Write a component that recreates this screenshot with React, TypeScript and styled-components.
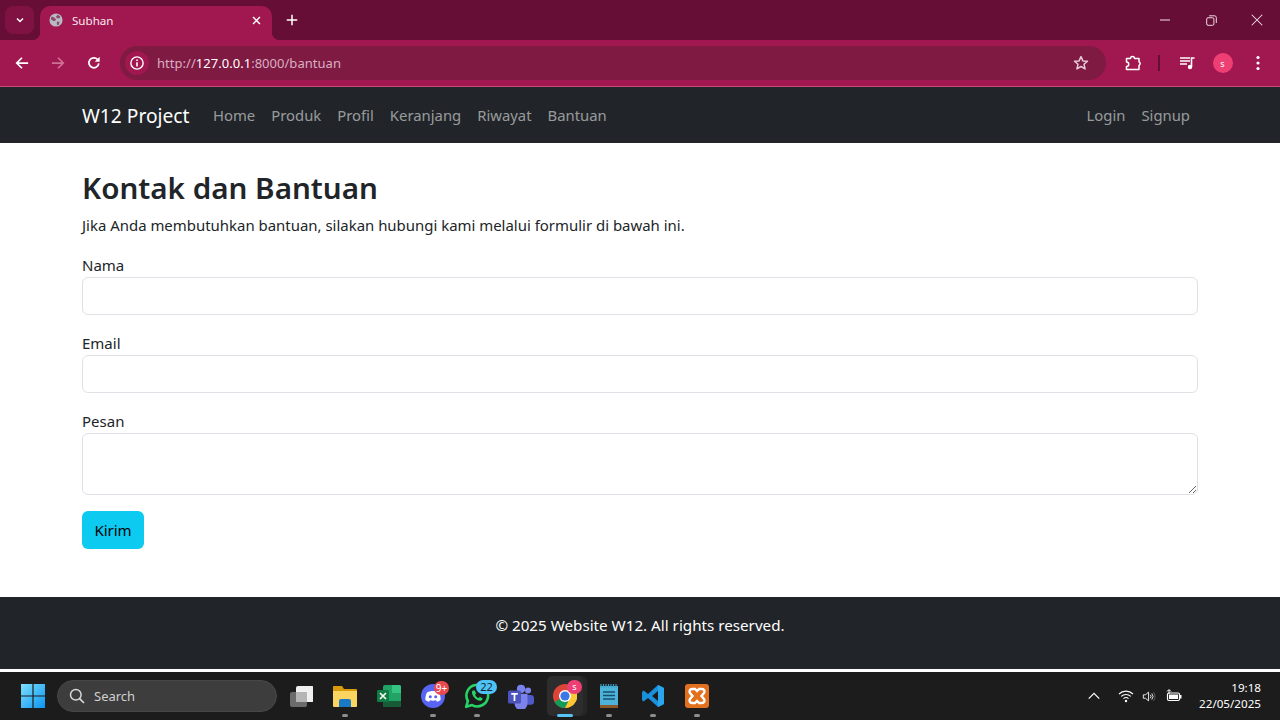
import styled, { createGlobalStyle } from 'styled-components';
import { ReactNode } from 'react';

const GlobalStyle = createGlobalStyle`
	html, body {
		margin: 0;
		padding: 0;
		height: 720px;
		overflow: hidden;
		background: #fff;
		font-family: 'Noto Sans', 'Open Sans', sans-serif;
	}
	* {
		box-sizing: border-box;
	}
`;

const Screen = styled.div`
	width: 1280px;
	height: 720px;
	display: flex;
	flex-direction: column;
	overflow: hidden;
`;

/* Browser chrome */
const TabStrip = styled.div`
	height: 40px;
	background: #660e35;
	display: flex;
	align-items: flex-end;
	padding-left: 5px;
	color: #fff;
`;
const TabSearch = styled.div`
	width: 29px;
	height: 28px;
	margin: 0 6px 6px 0;
	border-radius: 8px;
	background: #7f1242;
	display: flex;
	align-items: center;
	justify-content: center;
`;
const Tab = styled.div`
	position: relative;
	width: 232px;
	height: 34px;
	background: #a1174f;
	border-radius: 10px 10px 0 0;
	display: flex;
	align-items: center;
	padding: 0 10px 6px 9px;
	gap: 9px;
	&::after {
		content: '';
		position: absolute;
		right: -8px;
		bottom: 0;
		width: 8px;
		height: 8px;
		background: radial-gradient(circle at 100% 0, transparent 8px, #a1174f 8.5px);
	}
	&::before {
		content: '';
		position: absolute;
		left: -8px;
		bottom: 0;
		width: 8px;
		height: 8px;
		background: radial-gradient(circle at 0 0, transparent 8px, #a1174f 8.5px);
	}
`;
const TabTitle = styled.span`
	flex: 1;
	font-size: 11.6px;
	color: #f7e8ee;
`;
const NewTab = styled.div`
	width: 40px;
	height: 34px;
	padding-bottom: 6px;
	display: flex;
	align-items: center;
	justify-content: center;
`;
const WindowControls = styled.div`
	margin-left: auto;
	height: 40px;
	display: flex;
`;
const WindowButton = styled.div`
	width: 46px;
	height: 40px;
	display: flex;
	align-items: center;
	justify-content: center;
`;
const Toolbar = styled.div`
	height: 47px;
	background: #a1174f;
	border-bottom: 1px solid #c9497d;
	display: flex;
	align-items: center;
	padding: 0 4px;
`;
const ToolButton = styled.div<{ $w?: number }>`
	width: ${(p) => p.$w ?? 36}px;
	height: 34px;
	display: flex;
	align-items: center;
	justify-content: center;
	flex-shrink: 0;
`;
const Omnibox = styled.div`
	width: 986px;
	height: 34px;
	margin: 0 9px 0 8px;
	border-radius: 17px;
	background: #7f1a42;
	display: flex;
	align-items: center;
	padding: 0 17px 0 5px;
`;
const SiteInfo = styled.div`
	width: 24px;
	height: 24px;
	border-radius: 50%;
	background: #a1174f;
	display: flex;
	align-items: center;
	justify-content: center;
	margin-right: 8px;
`;
const Url = styled.div`
	flex: 1;
	font-size: 13px;
	letter-spacing: 0.03px;
	color: #d9afc2;
	b {
		font-weight: 400;
		color: #fff;
	}
`;
const ToolDivider = styled.div`
	width: 2px;
	height: 16px;
	background: #660e35;
	margin: 0 9px 0 7px;
`;
const Avatar = styled.div`
	width: 20px;
	height: 20px;
	border-radius: 50%;
	background: #ee3f75;
	color: #fff;
	font-size: 9px;
	display: flex;
	align-items: center;
	justify-content: center;
`;

/* Website */
const Navbar = styled.nav`
	height: 56px;
	background: #212529;
	display: flex;
	align-items: center;
	padding: 0 82px;
`;
const Brand = styled.div`
	font-size: 19.2px;
	color: #fff;
	width: 123px;
	white-space: nowrap;
`;
const NavLinks = styled.div<{ $right?: boolean }>`
	display: flex;
	margin-left: ${(p) => (p.$right ? 'auto' : '0')};
`;
const NavLink = styled.a`
	padding: 0 8px;
	font-size: 14.85px;
	color: rgba(255, 255, 255, 0.55);
	white-space: nowrap;
`;
const Main = styled.main`
	flex: 1;
	padding: 24px 82px 0;
	color: #212529;
`;
const Heading = styled.h1`
	margin: 0 0 6px;
	padding-top: 2px;
	font-size: 29.6px;
	font-weight: 600;
	line-height: 38.4px;
`;
const Lead = styled.p`
	margin: 0 0 16px;
	font-size: 14.95px;
	line-height: 24px;
`;
const Field = styled.div`
	margin-bottom: 16px;
`;
const Label = styled.label`
	display: block;
	font-size: 15px;
	line-height: 24px;
`;
const Input = styled.input`
	display: block;
	width: 100%;
	height: 38px;
	border: 1px solid #dee2e6;
	border-radius: 6px;
	background: #fff;
`;
const TextArea = styled.textarea`
	display: block;
	width: 100%;
	height: 62px;
	border: 1px solid #dee2e6;
	border-radius: 6px;
	background: #fff;
`;
const SubmitButton = styled.button`
	display: block;
	width: 62px;
	height: 38px;
	padding: 0;
	border: 0;
	border-radius: 6px;
	background: #0dcaf0;
	color: #000;
	font-family: inherit;
	font-size: 15px;
`;
const Footer = styled.footer`
	height: 72px;
	padding-top: 16px;
	background: #212529;
	color: #fff;
	text-align: center;
	font-size: 15.2px;
	line-height: 24px;
`;
const WhiteGap = styled.div`
	height: 3px;
	background: #fff;
`;

/* Windows taskbar */
const Taskbar = styled.div`
	height: 48px;
	background: #1c1c1c;
	display: flex;
	align-items: center;
	padding-left: 11px;
	color: #fff;
`;
const Slot = styled.div<{ $active?: boolean }>`
	position: relative;
	width: ${(p) => (p.$active ? 36 : 44)}px;
	height: 40px;
	margin: -1px ${(p) => (p.$active ? 4 : 0)}px 0;
	border-radius: 5px;
	display: flex;
	align-items: center;
	justify-content: center;
	background: ${(p) => (p.$active ? '#2d2d2d' : 'transparent')};
	box-shadow: ${(p) => (p.$active ? '4px 0 0 #262626' : 'none')};
`;
const Running = styled.span<{ $active?: boolean }>`
	position: absolute;
	bottom: -1px;
	left: 50%;
	transform: translateX(-50%);
	width: ${(p) => (p.$active ? 16 : 6)}px;
	height: 3px;
	border-radius: 2px;
	background: ${(p) => (p.$active ? '#58c4f5' : '#8e8e8e')};
`;
const Badge = styled.span<{ $bg: string; $w: number; $top: number; $right: number; $size?: number; $color?: string }>`
	position: absolute;
	top: ${(p) => p.$top}px;
	right: ${(p) => p.$right}px;
	width: ${(p) => p.$w}px;
	height: 14px;
	border-radius: 7px;
	background: ${(p) => p.$bg};
	color: ${(p) => p.$color ?? '#fff'};
	font-size: ${(p) => p.$size ?? 9}px;
	line-height: 14px;
	text-align: center;
`;
const SearchBox = styled.div`
	width: 220px;
	height: 32px;
	margin: 0 2px;
	border-radius: 16px;
	background: #3d3d3d;
	border: 1px solid #474747;
	display: flex;
	align-items: center;
	padding-left: 11px;
	gap: 9px;
	font-size: 13px;
	color: #d0d0d0;
`;
const Tray = styled.div`
	margin-left: auto;
	display: flex;
	align-items: center;
	height: 100%;
`;
const TrayIcon = styled.div<{ $w: number }>`
	width: ${(p) => p.$w}px;
	display: flex;
	justify-content: center;
`;
const Clock = styled.div`
	width: 88px;
	padding-right: 19px;
	text-align: right;
	font-size: 11.65px;
	line-height: 16px;
`;

const Svg = ({ size = 16, children }: { size?: number; children: ReactNode }) => (
	<svg width={size} height={size} viewBox="0 0 16 16" fill="none">
		{children}
	</svg>
);
const Icon24 = ({ size = 24, children }: { size?: number; children: ReactNode }) => (
	<svg width={size} height={size} viewBox="0 0 24 24" fill="none">
		{children}
	</svg>
);

function TaskApp({ children, active, running = true, badge }: { children: ReactNode; active?: boolean; running?: boolean; badge?: ReactNode }) {
	return (
		<Slot $active={active}>
			{children}
			{badge}
			{running && <Running $active={active} />}
		</Slot>
	);
}

export default function App() {
	return (
		<Screen>
			<GlobalStyle />
			<TabStrip>
				<TabSearch>
					<Svg size={12}>
						<path d="M4 6l4 4 4-4" stroke="#fff" strokeWidth="2" />
					</Svg>
				</TabSearch>
				<Tab>
					<Svg size={14}>
						<circle cx="8" cy="8" r="7.5" fill="#b7bcc4" />
						<path d="M3 4l3 1 2 2-1 2-2 0-3-2zM10 2l3 2-1 2-3 0-1-2zM9 10l3 0-1 4-2-1z" fill="#8d4a69" />
					</Svg>
					<TabTitle>Subhan</TabTitle>
					<Svg size={11}>
						<path d="M3 3l10 10M13 3L3 13" stroke="#fff" strokeWidth="2.2" />
					</Svg>
				</Tab>
				<NewTab>
					<Svg size={12}>
						<path d="M8 1v14M1 8h14" stroke="#fff" strokeWidth="2" />
					</Svg>
				</NewTab>
				<WindowControls>
					<WindowButton>
						<Svg size={10}>
							<path d="M0 8h16" stroke="#f2e3ea" strokeWidth="1.6" />
						</Svg>
					</WindowButton>
					<WindowButton>
						<Svg size={11}>
							<rect x="1" y="4" width="10.5" height="11" rx="2" stroke="#f2e3ea" strokeWidth="1.4" />
							<path d="M4.5 1.2h8a2.5 2.5 0 0 1 2.5 2.5v8" stroke="#f2e3ea" strokeWidth="1.4" />
						</Svg>
					</WindowButton>
					<WindowButton>
						<Svg size={12}>
							<path d="M1 1l14 14M15 1L1 15" stroke="#f2e3ea" strokeWidth="1.4" />
						</Svg>
					</WindowButton>
				</WindowControls>
			</TabStrip>
			<Toolbar>
				<ToolButton>
					<Svg size={14}>
						<path d="M15 8H2M8 2L2 8l6 6" stroke="#fff" strokeWidth="2" />
					</Svg>
				</ToolButton>
				<ToolButton>
					<Svg size={14}>
						<path d="M1 8h13M8 2l6 6-6 6" stroke="#cf7095" strokeWidth="2" />
					</Svg>
				</ToolButton>
				<ToolButton>
					<Svg size={14}>
						<path d="M13.5 8.5A5.7 5.7 0 1 1 12 3.8" stroke="#fff" strokeWidth="2" />
						<path d="M14.5 0.8v5.7H8.8z" fill="#fff" />
					</Svg>
				</ToolButton>
				<Omnibox>
					<SiteInfo>
						<Svg size={14}>
							<circle cx="8" cy="8" r="7" stroke="#fff" strokeWidth="1.6" />
							<path d="M8 7v5M8 4v1.8" stroke="#fff" strokeWidth="1.8" />
						</Svg>
					</SiteInfo>
					<Url>
						http://<b>127.0.0.1</b>:8000/bantuan
					</Url>
					<Svg size={16}>
						<path d="M8 1.6l1.9 4.3 4.6.4-3.5 3 1.1 4.6L8 11.5l-4.1 2.4L5 9.3l-3.5-3 4.6-.4z" stroke="#e7cbd8" strokeWidth="1.5" strokeLinejoin="round" />
					</Svg>
				</Omnibox>
				<ToolButton>
					<Svg size={16}>
						<path d="M1.5 3.5h4a2 2 0 0 1 4 0h4.5v3.2a2 2 0 0 1 0 3.6V14.5H1.5v-3a2 2 0 0 0 0-4.5z" stroke="#fff" strokeWidth="1.5" strokeLinejoin="round" />
					</Svg>
				</ToolButton>
				<ToolDivider />
				<ToolButton $w={36}>
					<Svg size={16}>
						<path d="M1 3h10M1 6h10M1 9h7" stroke="#fff" strokeWidth="1.5" />
						<circle cx="11" cy="12" r="2.2" fill="#fff" />
						<path d="M12.5 12V3h3" stroke="#fff" strokeWidth="1.6" />
					</Svg>
				</ToolButton>
				<ToolButton $w={35}>
					<Avatar>s</Avatar>
				</ToolButton>
				<ToolButton>
					<Svg size={16}>
						<circle cx="8" cy="2.5" r="1.6" fill="#fff" />
						<circle cx="8" cy="8" r="1.6" fill="#fff" />
						<circle cx="8" cy="13.5" r="1.6" fill="#fff" />
					</Svg>
				</ToolButton>
			</Toolbar>

			<Navbar>
				<Brand>W12 Project</Brand>
				<NavLinks>
					<NavLink>Home</NavLink>
					<NavLink>Produk</NavLink>
					<NavLink>Profil</NavLink>
					<NavLink>Keranjang</NavLink>
					<NavLink>Riwayat</NavLink>
					<NavLink>Bantuan</NavLink>
				</NavLinks>
				<NavLinks $right>
					<NavLink>Login</NavLink>
					<NavLink>Signup</NavLink>
				</NavLinks>
			</Navbar>
			<Main>
				<Heading>Kontak dan Bantuan</Heading>
				<Lead>Jika Anda membutuhkan bantuan, silakan hubungi kami melalui formulir di bawah ini.</Lead>
				<Field>
					<Label>Nama</Label>
					<Input />
				</Field>
				<Field>
					<Label>Email</Label>
					<Input />
				</Field>
				<Field>
					<Label>Pesan</Label>
					<TextArea />
				</Field>
				<SubmitButton>Kirim</SubmitButton>
			</Main>
			<Footer>© 2025 Website W12. All rights reserved.</Footer>
			<WhiteGap />

			<Taskbar>
				<Slot>
					<Svg size={24}>
						<defs>
							<linearGradient id="win" x1="0" y1="0" x2="1" y2="1">
								<stop offset="0" stopColor="#7fe0ff" />
								<stop offset="1" stopColor="#0a93f0" />
							</linearGradient>
						</defs>
						<path d="M0 0h7.6v7.6H0zM8.4 0H16v7.6H8.4zM0 8.4h7.6V16H0zM8.4 8.4H16V16H8.4z" fill="url(#win)" />
					</Svg>
				</Slot>
				<SearchBox>
					<Svg size={16}>
						<circle cx="6.8" cy="6.8" r="5.3" stroke="#d8d8d8" strokeWidth="1.5" />
						<path d="M10.6 10.6L15 15" stroke="#d8d8d8" strokeWidth="1.7" />
					</Svg>
					Search
				</SearchBox>
				<TaskApp running={false}>
					<Icon24>
						<rect x="1" y="8" width="17" height="15" rx="2" fill="#6b6b6b" />
						<rect x="7" y="2" width="18" height="16" rx="2" fill="#f0f0f0" />
						<rect x="7" y="8" width="11" height="10" fill="#b5b5b5" />
					</Icon24>
				</TaskApp>
				<TaskApp>
					<Icon24>
						<path d="M0 3a1 1 0 0 1 1-1h8l2 3h12a1 1 0 0 1 1 1v2H0z" fill="#d99a0c" />
						<path d="M0 7h24v15a1 1 0 0 1-1 1H1a1 1 0 0 1-1-1z" fill="#fbd560" />
						<path d="M6 17a2 2 0 0 1 2-2h8a2 2 0 0 1 2 2v6H6z" fill="#1a78c4" />
					</Icon24>
				</TaskApp>
				<TaskApp running={false}>
					<Icon24>
						<rect x="6" y="1" width="18" height="22" rx="2" fill="#21a366" />
						<path d="M15 1h7a2 2 0 0 1 2 2v6h-9z" fill="#33c481" />
						<path d="M6 17h18v4a2 2 0 0 1-2 2H8a2 2 0 0 1-2-2z" fill="#185c37" />
						<rect x="0" y="6" width="12" height="12" rx="1" fill="#107c41" />
						<path d="M3 9l6 6M9 9l-6 6" stroke="#fff" strokeWidth="1.6" />
					</Icon24>
				</TaskApp>
				<TaskApp
					badge={
						<Badge $bg="#ea4a4f" $w={15} $top={5} $right={6} $size={10}>
							9+
						</Badge>
					}
				>
					<Icon24>
						<circle cx="12" cy="12" r="12" fill="#5865f2" />
						<path d="M6 8.5c3.5-2 8.5-2 12 0 1.3 2.4 1.8 5 1.6 7.5-1.3 1-2.5 1.5-3.7 1.8l-.9-1.5c-2 .6-4 .6-6 0l-.9 1.5c-1.2-.3-2.4-.8-3.7-1.8-.2-2.5.3-5.1 1.6-7.5z" fill="#fff" />
						<circle cx="9.3" cy="12.8" r="1.5" fill="#5865f2" />
						<circle cx="14.7" cy="12.8" r="1.5" fill="#5865f2" />
					</Icon24>
				</TaskApp>
				<TaskApp
					badge={
						<Badge $bg="#4fc3f7" $w={21} $top={4} $right={2} $size={11} $color="#12242c">
							22
						</Badge>
					}
				>
					<Icon24 size={26}>
						<path d="M2 22l1.6-5.4A10 10 0 1 1 7.5 20.4z" stroke="#25d366" strokeWidth="2.4" strokeLinejoin="round" />
						<path d="M8 7c-1 1-1 3 .8 5.6 2 2.6 4.6 4 6.4 3.8 1.2-.2 2-1.2 2-2.2l-2.6-1.4-1.2 1.2c-1.4-.6-2.6-1.8-3.2-3.2l1-1.2L10 7z" fill="#25d366" />
					</Icon24>
				</TaskApp>
				<TaskApp running={false}>
					<Icon24 size={26}>
						<circle cx="18.5" cy="7" r="2.8" fill="#7b83eb" />
						<rect x="15" y="11" width="9" height="9" rx="3" fill="#5059c9" />
						<circle cx="12" cy="5.5" r="3.8" fill="#7b83eb" />
						<path d="M6 10h12v9a6 6 0 0 1-12 0z" fill="#7b83eb" />
						<rect x="0" y="7" width="12" height="12" rx="1.5" fill="#4b53bc" />
						<path d="M3 10h6M6 10v6.5" stroke="#fff" strokeWidth="1.6" />
					</Icon24>
				</TaskApp>
				<TaskApp
					active
					badge={
						<Badge $bg="#ee3f75" $w={15} $top={4} $right={1}>
							s
						</Badge>
					}
				>
					<Icon24>
						<circle cx="12" cy="12" r="12" fill="#db4437" />
						<path d="M12 12L1.6 18A12 12 0 0 0 12 24l6-12z" fill="#0f9d58" />
						<path d="M12 6h10.6A12 12 0 0 1 12 24l6-12a6 6 0 0 0-6-6z" fill="#fcc934" />
						<circle cx="12" cy="12" r="6" fill="#fff" />
						<circle cx="12" cy="12" r="4.6" fill="#3b78e7" />
					</Icon24>
				</TaskApp>
				<TaskApp>
					<Icon24>
						<rect x="3" y="2" width="18" height="22" fill="#4db3d9" />
						<rect x="3" y="21" width="18" height="3" fill="#8a5a2b" />
						<path d="M4 3.5V0M6.5 3.5V0M9 3.5V0M11.5 3.5V0M14 3.5V0M16.5 3.5V0M19 3.5V0" stroke="#3a9cc4" strokeWidth="1.2" />
						<path d="M6 8h12M6 11.5h12M6 15h12" stroke="#174f6b" strokeWidth="1.4" />
					</Icon24>
				</TaskApp>
				<TaskApp>
					<Icon24>
						<path d="M17 1l6 3v16l-6 3-10-9-4.4 3.4L1 16V8l1.6-1.4L7 10zM17 7l-6 5 6 5z" fill="#1a8fdc" />
						<path d="M17 1l6 3v16l-6 3z" fill="#2aa6ef" />
					</Icon24>
				</TaskApp>
				<TaskApp>
					<Icon24>
						<rect x="0" y="0" width="24" height="24" rx="3" fill="#e2701f" />
						<path d="M7 5h3l2 2 2-2h3a2.5 2.5 0 0 1 2 4l-2.5 3 2.5 3a2.5 2.5 0 0 1-2 4h-3l-2-2-2 2H7a2.5 2.5 0 0 1-2-4l2.5-3L5 9a2.5 2.5 0 0 1 2-4z" stroke="#fff" strokeWidth="2.4" />
					</Icon24>
				</TaskApp>
				<Tray>
					<TrayIcon $w={32}>
						<Svg size={12}>
							<path d="M1 11.5L8 4.5l7 7" stroke="#fff" strokeWidth="1.6" />
						</Svg>
					</TrayIcon>
					<TrayIcon $w={32}>
						<Svg size={16}>
							<path d="M1 6a10 10 0 0 1 14 0M3.2 8.4a7 7 0 0 1 9.6 0M5.5 10.7a3.6 3.6 0 0 1 5 0" stroke="#fff" strokeWidth="1.1" />
							<circle cx="8" cy="13" r="1.2" fill="#fff" />
						</Svg>
					</TrayIcon>
					<TrayIcon $w={14}>
						<Svg size={17}>
							<path d="M1.5 6v4h2.5l3.5 3V3L4 6z" stroke="#fff" strokeWidth="1" />
							<path d="M9.5 6a3 3 0 0 1 0 4M11.2 4.5a5.5 5.5 0 0 1 0 7" stroke="#fff" strokeWidth="1" />
							<path d="M13 3a7.5 7.5 0 0 1 0 10" stroke="#666" strokeWidth="1" />
						</Svg>
					</TrayIcon>
					<TrayIcon $w={36}>
						<Svg size={16}>
							<rect x="1.5" y="5" width="12" height="7.5" rx="1.5" stroke="#fff" strokeWidth="1.2" />
							<rect x="3" y="6.5" width="9" height="4.5" fill="#fff" />
							<rect x="14" y="7" width="1.5" height="3.5" fill="#fff" />
							<path d="M3 6V2M1 3.5L3 1.5 5 3.5" stroke="#fff" strokeWidth="1" />
						</Svg>
					</TrayIcon>
					<Clock>
						19:18
						<br />
						22/05/2025
					</Clock>
				</Tray>
			</Taskbar>
		</Screen>
	);
}
